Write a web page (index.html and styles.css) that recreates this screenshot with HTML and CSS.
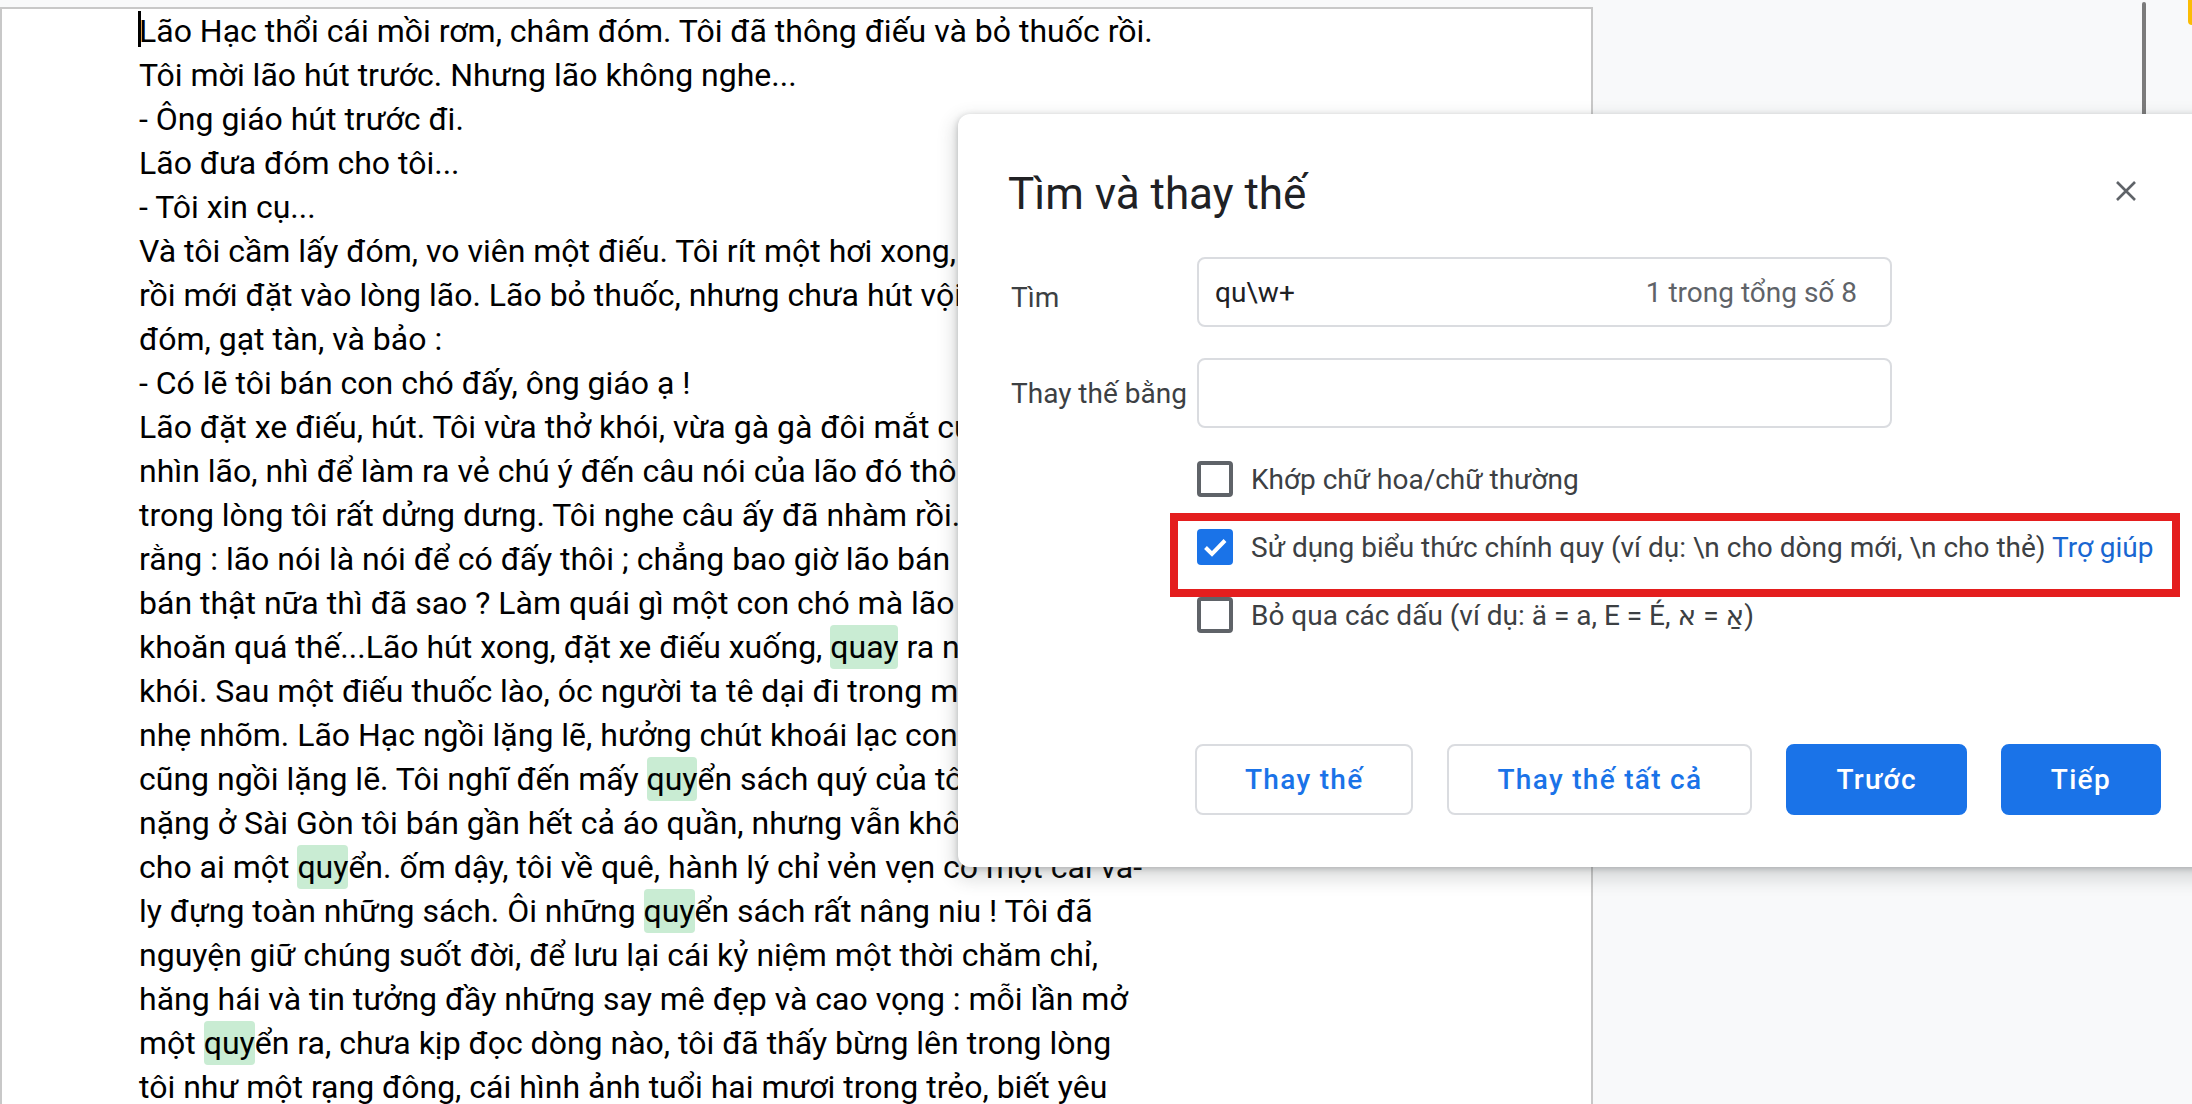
FILE: index.html
```html
<!DOCTYPE html>
<html lang="vi">
<head>
<meta charset="utf-8">
<title>Tìm và thay thế</title>
<link rel="stylesheet" href="styles.css">
</head>
<body>
<div class="workspace">
  <div class="page">
    <div class="doc">
      <div class="line"><span class="caret"></span>Lão Hạc thổi cái mồi rơm, châm đóm. Tôi đã thông điếu và bỏ thuốc rồi.</div>
      <div class="line">Tôi mời lão hút trước. Nhưng lão không nghe...</div>
      <div class="line">- Ông giáo hút trước đi.</div>
      <div class="line">Lão đưa đóm cho tôi...</div>
      <div class="line">- Tôi xin cụ...</div>
      <div class="line">Và tôi cầm lấy đóm, vo viên một điếu. Tôi rít một hơi xong, thông điếu</div>
      <div class="line">rồi mới đặt vào lòng lão. Lão bỏ thuốc, nhưng chưa hút vội. Lão cầm lấy</div>
      <div class="line">đóm, gạt tàn, và bảo :</div>
      <div class="line">- Có lẽ tôi bán con chó đấy, ông giáo ạ !</div>
      <div class="line">Lão đặt xe điếu, hút. Tôi vừa thở khói, vừa gà gà đôi mắt của người say,</div>
      <div class="line">nhìn lão, nhì để làm ra vẻ chú ý đến câu nói của lão đó thôi. Thật ra thì</div>
      <div class="line">trong lòng tôi rất dửng dưng. Tôi nghe câu ấy đã nhàm rồi. Tôi lại biết</div>
      <div class="line">rằng : lão nói là nói để có đấy thôi ; chẳng bao giờ lão bán đâu. Vả lại, có</div>
      <div class="line">bán thật nữa thì đã sao ? Làm quái gì một con chó mà lão có vẻ băn</div>
      <div class="line">khoăn quá thế...Lão hút xong, đặt xe điếu xuống, <span class="hl">quay</span> ra ngoài, thở</div>
      <div class="line">khói. Sau một điếu thuốc lào, óc người ta tê dại đi trong một nỗi đê mê</div>
      <div class="line">nhẹ nhõm. Lão Hạc ngồi lặng lẽ, hưởng chút khoái lạc con con ấy. Tôi</div>
      <div class="line">cũng ngồi lặng lẽ. Tôi nghĩ đến mấy <span class="hl">quy</span>ển sách quý của tôi. Hồi tôi bị ốm</div>
      <div class="line">nặng ở Sài Gòn tôi bán gần hết cả áo quần, nhưng vẫn không chịu bán</div>
      <div class="line">cho ai một <span class="hl">quy</span>ển. ốm dậy, tôi về quê, hành lý chỉ vẻn vẹn có một cái va-</div>
      <div class="line">ly đựng toàn những sách. Ôi những <span class="hl">quy</span>ển sách rất nâng niu ! Tôi đã</div>
      <div class="line">nguyện giữ chúng suốt đời, để lưu lại cái kỷ niệm một thời chăm chỉ,</div>
      <div class="line">hăng hái và tin tưởng đầy những say mê đẹp và cao vọng : mỗi lần mở</div>
      <div class="line">một <span class="hl">quy</span>ển ra, chưa kịp đọc dòng nào, tôi đã thấy bừng lên trong lòng</div>
      <div class="line">tôi như một rạng đông, cái hình ảnh tuổi hai mươi trong trẻo, biết yêu</div>
    </div>
  </div>

  <div class="scroll-mark"></div>
  <div class="corner-badge"></div>

  <div class="dialog">
    <div class="dlg-head">
      <div class="dlg-title">Tìm và thay thế</div>
      <div class="dlg-close">
        <svg width="22" height="22" viewBox="0 0 22 22"><path d="M2 2 L20 20 M20 2 L2 20" stroke="#5f6368" stroke-width="2.6" fill="none"/></svg>
      </div>
    </div>

    <div class="form">
      <div class="label label-find">Tìm</div>
      <div class="field">
        <span class="field-text">qu\w+</span>
        <span class="field-count">1 trong tổng số 8</span>
      </div>
      <div class="label">Thay thế bằng</div>
      <div class="field"></div>
    </div>

    <div class="options">
      <div class="option">
        <span class="box"></span>
        <span class="opt-text">Khớp chữ hoa/chữ thường</span>
      </div>
      <div class="option">
        <span class="box checked">
          <svg width="36" height="36" viewBox="0 0 36 36"><path d="M8.5 18.5 L15 25 L28 11.5" stroke="#fff" stroke-width="4" fill="none"/></svg>
        </span>
        <span class="opt-text">Sử dụng biểu thức chính quy (ví dụ: \n cho dòng mới, \n cho thẻ) <span class="link">Trợ giúp</span></span>
      </div>
      <div class="option">
        <span class="box"></span>
        <span class="opt-text">Bỏ qua các dấu (ví dụ: ä = a, E = É, א&lrm; = &lrm;אַ)</span>
      </div>
    </div>

    <div class="actions">
      <button class="btn outline">Thay thế</button>
      <button class="btn outline">Thay thế tất cả</button>
      <button class="btn primary">Trước</button>
      <button class="btn primary">Tiếp</button>
    </div>
  </div>

  <div class="annotation"></div>
</div>
</body>
</html>
```

FILE: styles.css
```css
* { box-sizing: border-box; }

html, body {
  margin: 0;
  padding: 0;
  width: 2192px;
  height: 1104px;
  overflow: hidden;
  background: #f8f9fa;
  font-family: Roboto, "Noto Sans", "DejaVu Sans", sans-serif;
}

.workspace {
  position: relative;
  width: 2192px;
  height: 1104px;
  overflow: hidden;
}

.page {
  margin-top: 7px;
  width: 1593px;
  height: 1200px;
  background: #fff;
  border: 2px solid #c8c8c8;
  border-bottom: none;
}

.doc {
  padding-left: 137px;
  font-size: 32px;
  line-height: 44px;
  color: #000;
}

.line {
  position: relative;
  white-space: nowrap;
}

.caret {
  position: absolute;
  left: -1px;
  top: 2px;
  width: 3px;
  height: 36px;
  background: #000;
}

.hl {
  display: inline-block;
  background: #c9ecd3;
  border-radius: 4px;
}

.scroll-mark {
  position: absolute;
  left: 2142px;
  top: 2px;
  width: 4px;
  height: 200px;
  background: #7b7b7b;
  border-radius: 2px;
}

.corner-badge {
  position: absolute;
  left: 2188px;
  top: 0;
  width: 8px;
  height: 25px;
  background: #fbbc04;
  border-radius: 0 0 0 4px;
}

.dialog {
  position: absolute;
  left: 958px;
  top: 114px;
  width: 1260px;
  height: 753px;
  background: #fff;
  border-radius: 12px;
  box-shadow: 0 8px 16px 6px rgba(60, 64, 67, 0.15), 0 2px 6px rgba(60, 64, 67, 0.3);
  padding: 49px 0 0 50px;
}

.dlg-head {
  display: flex;
  align-items: center;
  justify-content: space-between;
  width: 1140px;
  height: 56px;
}

.dlg-title {
  font-size: 44px;
  line-height: 56px;
  color: #202124;
  padding-top: 5px;
}

.dlg-close {
  width: 44px;
  height: 44px;
  display: flex;
  align-items: center;
  justify-content: center;
}

.form {
  margin-top: 38px;
  display: grid;
  grid-template-columns: 189px 695px;
  row-gap: 31px;
  align-items: center;
}

.label {
  font-size: 28px;
  color: #3c4043;
  white-space: nowrap;
  padding-left: 3px;
}

.label-find {
  padding-top: 10px;
}

.field {
  height: 70px;
  border: 2px solid #dadce0;
  border-radius: 8px;
  display: flex;
  align-items: center;
  justify-content: space-between;
  padding: 0 33px 0 16px;
  font-size: 28px;
}

.field-text { color: #202124; }
.field-count { color: #5f6368; }

.options {
  margin-top: 17px;
  margin-left: 189px;
}

.option {
  height: 68px;
  display: flex;
  align-items: center;
  gap: 18px;
  font-size: 28px;
  color: #3c4043;
  white-space: nowrap;
}

.box {
  flex: none;
  width: 36px;
  height: 36px;
  border: 4px solid #5f6368;
  border-radius: 4px;
}

.box.checked {
  border: none;
  background: #1a73e8;
  display: flex;
}

.link { color: #1967d2; }

.actions {
  margin-top: 95px;
  margin-left: 187px;
  display: flex;
  gap: 34px;
}

.btn {
  height: 71px;
  padding: 0 48px;
  border-radius: 8px;
  font-family: Roboto, sans-serif;
  font-size: 28px;
  font-weight: 500;
  letter-spacing: 1.3px;
  cursor: pointer;
}

.btn.outline {
  background: #fff;
  border: 2px solid #dadce0;
  color: #1a73e8;
}

.btn.primary {
  background: #1a73e8;
  border: 2px solid #1a73e8;
  color: #fff;
}

.annotation {
  position: absolute;
  left: 1170px;
  top: 513px;
  width: 1010px;
  height: 84px;
  border: 8px solid #e41e1e;
}
```
